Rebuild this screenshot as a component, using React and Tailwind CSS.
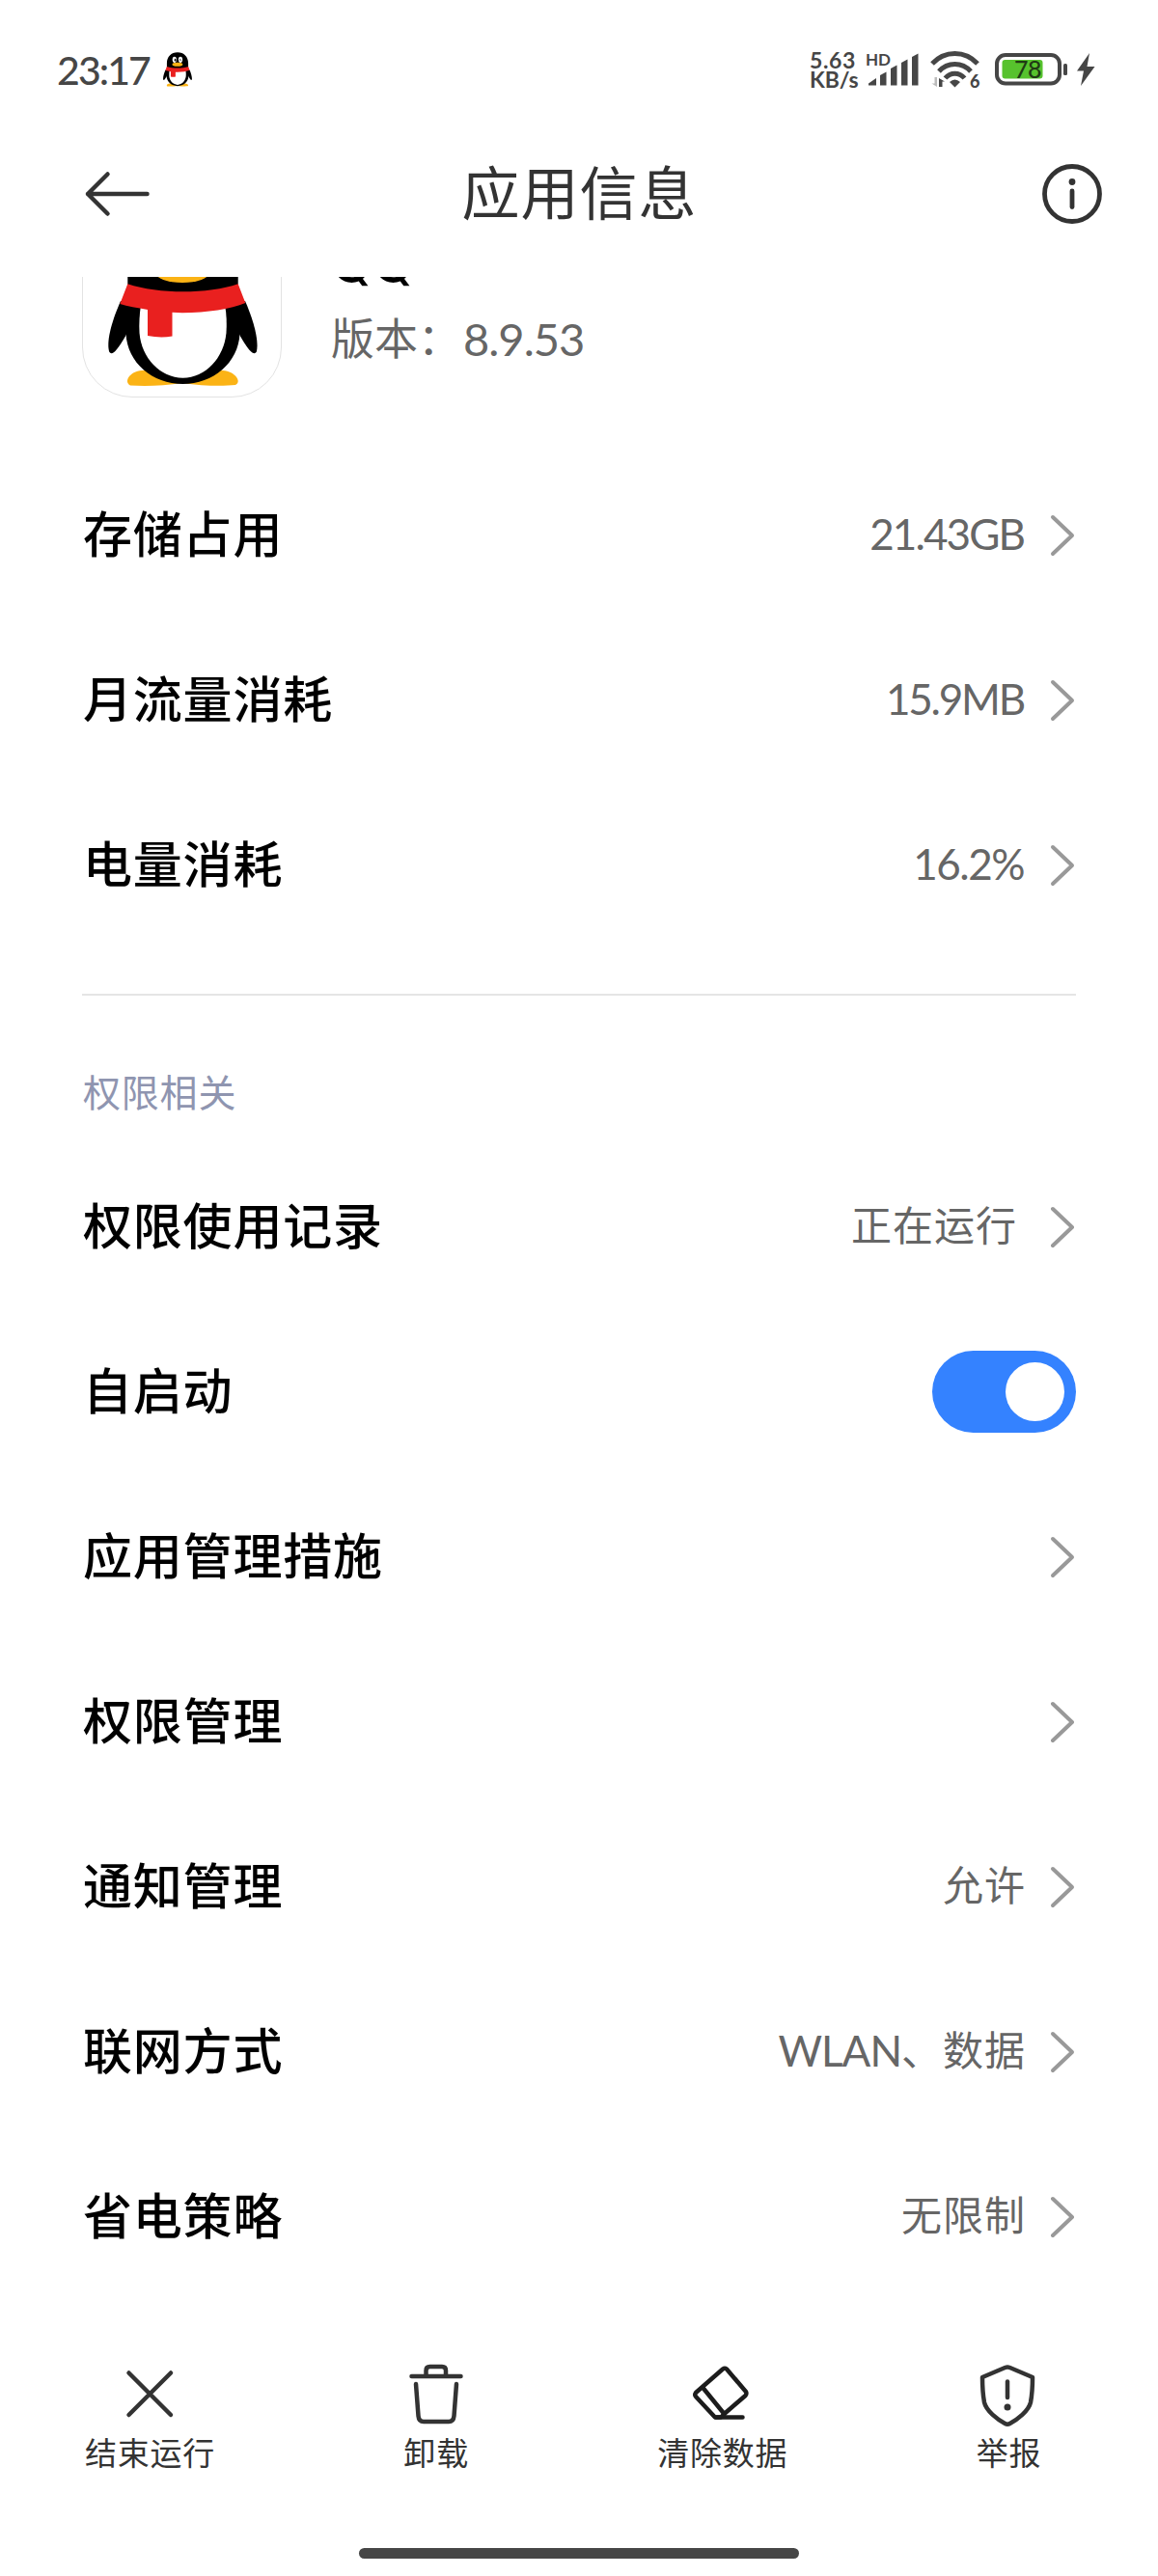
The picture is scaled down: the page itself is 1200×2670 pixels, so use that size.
const usageRows = [
  { id: 1, label: "存储占用", value: "21.43GB", tracking: "tracking-[-1.9px]" },
  { id: 2, label: "月流量消耗", value: "15.9MB", tracking: "tracking-[-2.2px]" },
  { id: 3, label: "电量消耗", value: "16.2%", tracking: "tracking-[-1.5px]" },
];

const permissionRows = [
  { id: 1, label: "权限使用记录", value: "正在运行", extraSpace: true },
  { id: 2, label: "自启动", toggle: true },
  { id: 3, label: "应用管理措施" },
  { id: 4, label: "权限管理" },
  { id: 5, label: "通知管理", value: "允许" },
  { id: 6, label: "联网方式", latin: "WLAN", value: "、数据" },
  { id: 7, label: "省电策略", value: "无限制" },
];

const Penguin = ({ className, viewBox }) => (
  <svg className={className} viewBox={viewBox}>
    <path
      d="M50 193.500 C43 190 49 179 62 178 H146 C159 179 166 190 159 193 C145 194.500 125 194 104 191 C85 194 65 194.500 50 193.500 Z"
      fill="#fbb315"
    />
    <path
      d="M40 106 C32 124 25 146 28 158 C30 163 35 160 45 142.500 L60 110 Z"
      fill="#000"
    />
    <path
      d="M169 106 C177 124 183.500 146 181 158 C179 163 174 160 164 142.500 L149 110 Z"
      fill="#000"
    />
    <path
      d="M47.300 88 V70 C47.300 36 70 12 104.500 12 C139 12 161.700 36 161.700 70 V88 L163.500 140 C162 170 136 192 104.500 192 C73 192 47 170 45.500 140 Z"
      fill="#000"
    />
    <path
      d="M61 110 H148 C150 120 150 130 149.500 139 C147 165 128 185.700 104.500 185.700 C81 185.700 61.500 165 59.500 139 C59 130 59.500 120 61 110 Z"
      fill="#fff"
    />
    <ellipse cx="88" cy="51" rx="11" ry="16" fill="#fff" />
    <ellipse cx="120" cy="51" rx="11" ry="16" fill="#fff" />
    <ellipse cx="92" cy="53" rx="4.500" ry="7" fill="#000" />
    <path d="M113 55 Q119 45 125 55" stroke="#000" strokeWidth="4" fill="none" />
    <ellipse cx="104" cy="76.500" rx="28" ry="10.500" fill="#fbb315" />
    <path
      d="M47.300 88.300 C80 99 130 99 161.700 88.300 L169.300 108 C154 114 130 118.300 104 118.300 L93.500 117.800 V142.500 Q81 144.500 68 142 V115 C57 113 47 111.500 39.300 109 Z"
      fill="#e9201f"
    />
  </svg>
);

const Chevron = () => (
  <svg className="h-[46px] w-[27px]" viewBox="0 0 27 46" fill="none">
    <path
      d="M3 4 L23 23 L3 42"
      stroke="#999"
      strokeWidth="4"
      strokeLinecap="round"
      strokeLinejoin="round"
    />
  </svg>
);

const StatusBar = () => (
  <div className="flex h-[115px] items-center justify-between pt-[29px] pr-[65px] pl-[59px] text-[#464646]">
    <div className="flex items-center">
      <span className="w-[110px] text-[41px] leading-none font-medium tracking-[-1.9px]">
        23:17
      </span>
      <Penguin className="h-9 w-[30px]" viewBox="27 12 155 183" />
    </div>
    <div className="flex items-center">
      <div className="w-[59px] text-[23px] leading-[20px] font-bold">
        <div className="tracking-[0.6px]">5.63</div>
        <div className="tracking-[-0.1px]">KB/s</div>
      </div>
      <svg
        className="mr-3 h-10 w-[54px] overflow-visible"
        viewBox="0 0 54 40"
        fill="#464646"
      >
        <text x="-1" y="16" fontSize="17" fontWeight="700">
          HD
        </text>
        <path d="M2 36.500 V34.500 L10 29 V36.500 Z" />
        <path d="M14 36.500 V26 L20.500 22.500 V36.500 Z" />
        <path d="M25 36.500 V19 L31.500 15.500 V36.500 Z" />
        <path d="M36 36.500 V13 L42.500 9.500 V36.500 Z" />
        <path d="M47 36.500 V7 L53.500 3.500 V36.500 Z" />
      </svg>
      <svg
        className="mr-4 h-10 w-[51px] overflow-visible"
        viewBox="0 0 51 40"
        fill="none"
      >
        <g stroke="#464646" strokeWidth="5">
          <path d="M2 14 C15 0 36 0 49 14" />
          <path d="M9 22 C18 12 33 12 42 22" />
          <path d="M15.500 29 C21 22.500 30 22.500 35.500 29" />
        </g>
        <path d="M20 33 Q25.500 28 31 33 L25.500 38.500 Z" fill="#464646" />
        <path d="M7 28 V38 L1.500 34.500 H4.500 V28 Z" fill="#bbb" />
        <path d="M9 38 V29 L15 32.500 H12.500 V38 Z" fill="#464646" />
        <text x="41" y="38.500" fontSize="18" fontWeight="900" fill="#464646">
          6
        </text>
      </svg>
      <svg className="mr-2 h-10 w-[76px] overflow-visible" viewBox="0 0 76 40">
        <rect
          x="2"
          y="5"
          width="65"
          height="29.500"
          rx="9"
          fill="none"
          stroke="#464646"
          strokeWidth="4"
        />
        <rect x="7.500" y="10" width="42" height="19.500" rx="3" fill="#57c22d" />
        <text
          x="20"
          y="29"
          fontSize="25"
          letterSpacing="-0.500"
          fill="#203a14"
          fontWeight="500"
        >
          78
        </text>
        <rect x="71" y="14" width="4" height="12" rx="1.500" fill="#464646" />
      </svg>
      <svg className="h-9 w-5" viewBox="0 0 20 36" fill="#464646">
        <path d="M14 1 L1 19.500 H8 L5 35 L19.500 15 H11.500 Z" />
      </svg>
    </div>
  </div>
);

const Header = () => (
  <div className="flex h-[172px] items-center justify-between pr-[57px] pl-[87px]">
    <svg className="h-[50px] w-[70px]" viewBox="0 0 70 50" fill="none">
      <path
        d="M24.500 4.500 L4 25 L24.500 45.500 M4 25 H65.500"
        stroke="#333"
        strokeWidth="4.500"
        strokeLinecap="round"
        strokeLinejoin="round"
      />
    </svg>
    <h1 className="mr-[35px] pb-[2px] text-[60px] leading-none tracking-[1px] text-[#333]">
      应用信息
    </h1>
    <svg className="h-[64px] w-[64px]" viewBox="0 0 64 64" fill="none">
      <circle cx="32" cy="32" r="28.500" stroke="#333" strokeWidth="4.800" />
      <circle cx="32" cy="19.500" r="3.400" fill="#333" />
      <path
        d="M32 29 V45.500"
        stroke="#333"
        strokeWidth="4.800"
        strokeLinecap="round"
      />
    </svg>
  </div>
);

const AppSummary = () => (
  <div className="flex h-[206px]">
    <div className="w-[207px] shrink-0 rounded-[52px] border border-[#e3e3e3]">
      <Penguin className="h-[206px] w-[206px]" viewBox="1 1 206 206" />
    </div>
    <div className="ml-[51px] pt-[31px]">
      <div className="font-[Inter,sans-serif] text-[56px] leading-[72px] font-medium text-black">
        QQ
      </div>
      <div className="mt-3 flex items-center text-[45px] leading-[60px] text-[#666]">
        <span>版本：</span>
        <span className="ml-[2px] text-[47px] tracking-[-1px]">8.9.53</span>
      </div>
    </div>
  </div>
);

const Row = ({ row }) => (
  <div className="flex h-[171px] items-center justify-between">
    <span className="pb-[2px] pl-[1px] text-[51px] leading-none font-medium tracking-[0.8px] text-black">
      {row.label}
    </span>
    {row.toggle ? (
      <div className="flex h-[85px] w-[149px] items-center justify-end rounded-full bg-[#3482ff] pr-3">
        <div className="h-[61px] w-[61px] rounded-full bg-white"></div>
      </div>
    ) : (
      <div className="flex items-center text-[42px] leading-none text-[#666]">
        {row.latin && (
          <span className="pb-[3px] text-[44px] tracking-[-1px]">
            {row.latin}
          </span>
        )}
        {row.tracking ? (
          <span className={`mr-[2px] pb-[3px] text-[44px] ${row.tracking}`}>
            {row.value}
          </span>
        ) : (
          <span className="pb-[3px] tracking-[1px]">{row.value}</span>
        )}
        <span className={row.extraSpace ? "ml-[34px]" : "ml-[25px]"}>
          <Chevron />
        </span>
      </div>
    )}
  </div>
);

const Action = ({ label, children }) => (
  <div className="flex w-[140px] flex-col items-center text-[#333]">
    <svg
      className="h-[70px] w-[70px]"
      viewBox="0 0 70 70"
      fill="none"
      stroke="#333"
      strokeWidth="4.500"
      strokeLinecap="round"
      strokeLinejoin="round"
    >
      {children}
    </svg>
    <span className="mt-2 pl-[1px] text-[33px] leading-[36px] tracking-[0.8px] whitespace-nowrap">
      {label}
    </span>
  </div>
);

const BottomBar = () => (
  <div className="flex h-[258px] items-start justify-between px-[85px] pt-[63px]">
    <Action label="结束运行">
      <path d="M13.500 13.500 L57 57 M57 13.500 L13.500 57" />
    </Action>
    <Action label="卸载">
      <path d="M9.500 17 H60.500" />
      <path d="M24.500 16 V11 Q24.500 7 28.500 7 H41 Q45 7 45 11 V16" />
      <path d="M14 25 L16.500 58 Q17 64 22 64 H48 Q53 64 53.500 58 L56 25" />
    </Action>
    <Action label="清除数据">
      <g stroke="#1c1c1c">
        <path d="M36 9.500 Q38 8 40 9.500 L60 33 Q61 35 59.500 37 L37.500 56 L34 59.500 H28 L8 38 Q6.500 36 8 34 Z" />
        <path d="M15.500 29 L37.500 56 M29 59.500 H56.500" />
      </g>
    </Action>
    <Action label="举报">
      <path d="M31.500 8 Q34 7 36.500 8 L60 18 C60 26 59.500 36 58 44 C56 53 44 62 36.500 66 Q34 67.500 31.500 66 C24 62 12 53 10 44 C8.500 36 8 26 8 18 Z" />
      <path d="M34 22.500 V39" />
      <circle cx="34" cy="49" r="3.500" fill="#333" stroke="none" />
    </Action>
  </div>
);

const App = () => {
  return (
    <div className="flex h-[2670px] w-[1200px] flex-col overflow-hidden bg-white font-[Lato,'Noto_Sans_CJK_SC',sans-serif]">
      <StatusBar />
      <Header />
      {/* The list is scrolled a little, so the app card is cut by the header */}
      <div className="h-[2096px] overflow-hidden px-[85px]">
        <div className="-mt-[81px]">
          <AppSummary />
          <div className="pt-[57px]">
            {usageRows.map((row) => (
              <Row key={row.id} row={row} />
            ))}
          </div>
          <div className="mt-12 h-[2px] bg-[#e5e5e5]"></div>
          <h2 className="flex h-[154px] items-center pt-[46px] pl-[1px] text-[39px] leading-none tracking-[0.8px] text-[#8f95b0]">
            权限相关
          </h2>
          {permissionRows.map((row) => (
            <Row key={row.id} row={row} />
          ))}
        </div>
      </div>
      <BottomBar />
      <div className="mx-auto h-[11px] w-[456px] rounded-full bg-[#464646]"></div>
    </div>
  );
};

export default App;
